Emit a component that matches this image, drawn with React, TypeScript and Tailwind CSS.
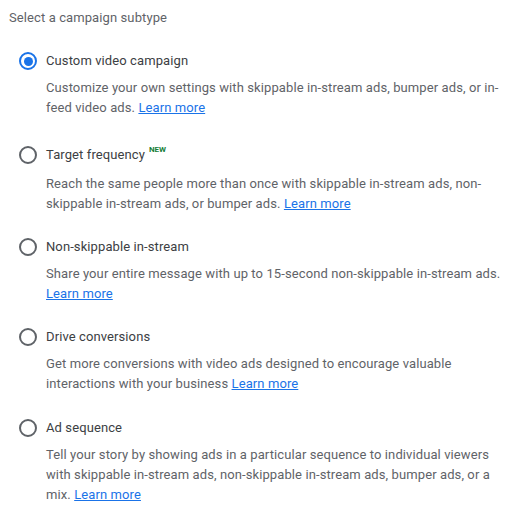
import { useState } from "react";

interface Subtype {
  id: string;
  title: string;
  description: string;
  isNew?: boolean;
}

const subtypes: Subtype[] = [
  {
    id: "custom",
    title: "Custom video campaign",
    description: "Customize your own settings with skippable in-stream ads, bumper ads, or in-feed video ads.",
  },
  {
    id: "frequency",
    title: "Target frequency",
    description: "Reach the same people more than once with skippable in-stream ads, non-skippable in-stream ads, or bumper ads.",
    isNew: true,
  },
  {
    id: "nonskip",
    title: "Non-skippable in-stream",
    description: "Share your entire message with up to 15-second non-skippable in-stream ads.",
  },
  {
    id: "conversions",
    title: "Drive conversions",
    description: "Get more conversions with video ads designed to encourage valuable interactions with your business",
  },
  {
    id: "sequence",
    title: "Ad sequence",
    description: "Tell your story by showing ads in a particular sequence to individual viewers with skippable in-stream ads, non-skippable in-stream ads, bumper ads, or a mix.",
  },
];

const Radio = ({ checked }: { checked: boolean }) => (
  <div
    className={`w-[18px] h-[18px] rounded-full border-2 flex items-center justify-center ${
      checked ? "border-[#1a73e8]" : "border-[#5f6368]"
    }`}
  >
    {checked && <div className="w-[9px] h-[9px] rounded-full bg-[#1a73e8]" />}
  </div>
);

export default function App() {
  const [selected, setSelected] = useState("custom");

  return (
    <div
      className="w-[512px] h-[512px] bg-white pl-[9px] pt-[8px] overflow-hidden"
      style={{ fontFamily: "Roboto, 'Liberation Sans', sans-serif" }}
    >
      <div className="text-[13px] leading-[20px] tracking-[0.1px] text-[#5f6368]">Select a campaign subtype</div>

      <div className="mt-[23px] flex flex-col gap-[23px]">
        {subtypes.map((s) => (
          <div
            key={s.id}
            className={`flex cursor-pointer ${s.id === "frequency" ? "pt-1" : ""} ${s.id === "sequence" ? "pt-[1px]" : ""}`}
            onClick={() => setSelected(s.id)}
          >
            <div className="w-[37px] pl-[10px] pt-[1px] shrink-0">
              <Radio checked={selected === s.id} />
            </div>
            <div className="w-[458px] tracking-[0.1px]">
              <div className="text-[13px] leading-[20px] text-[#3c4043]">
                {s.title}
                {s.isNew && (
                  <span className="relative -top-[7px] ml-[4px] text-[8px] font-bold tracking-normal text-[#188038]">NEW</span>
                )}
              </div>
              <p className="mt-[7px] text-[13px] leading-[20px] text-[#5f6368]">
                {s.description}{" "}
                <a href="#" className="text-[#1a73e8] underline">
                  Learn more
                </a>
              </p>
            </div>
          </div>
        ))}
      </div>
    </div>
  );
}
